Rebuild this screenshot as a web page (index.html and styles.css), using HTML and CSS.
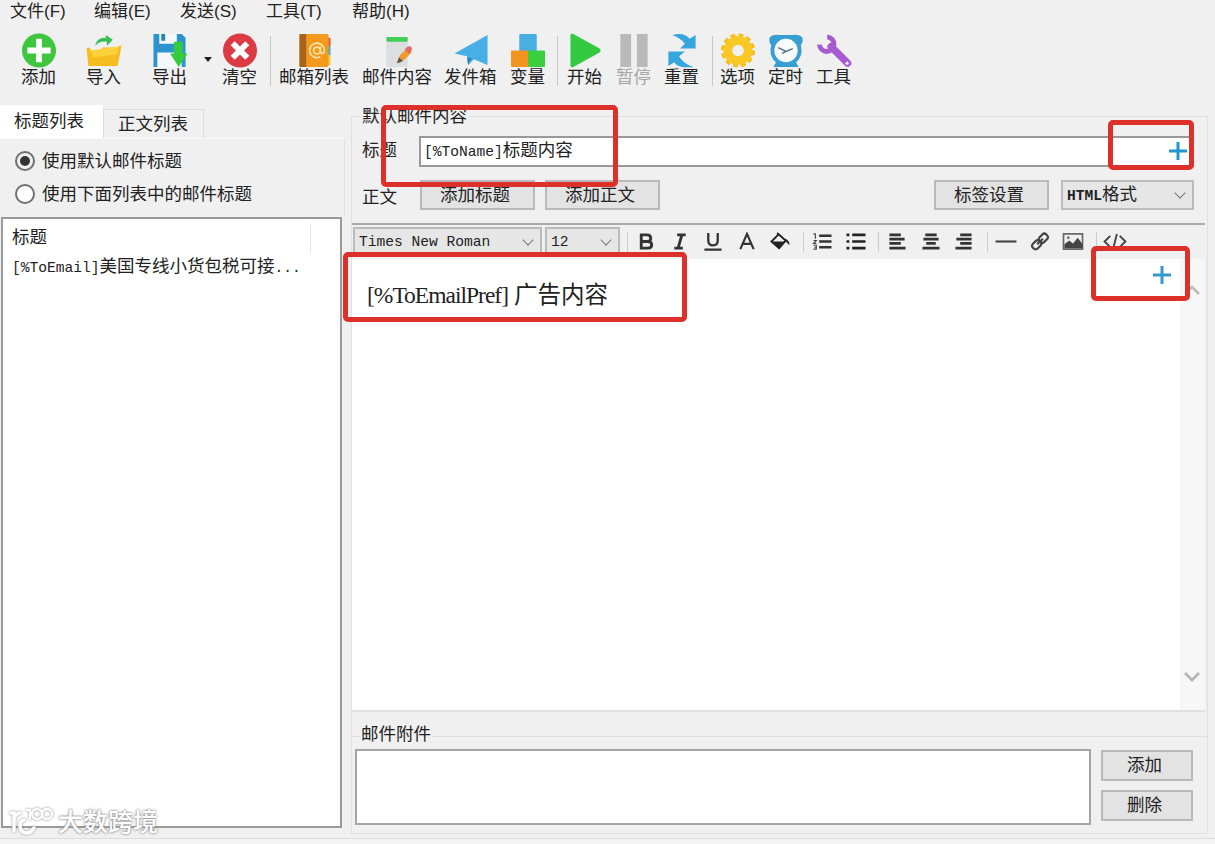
FILE: index.html
```html
<!DOCTYPE html>
<html lang="zh-CN">
<head>
    <meta charset="UTF-8">
    <meta name="viewport" content="width=device-width, initial-scale=1.0">
    <title>邮件内容</title>
    <link rel="stylesheet" href="styles.css">
</head>
<body>
<div class="window">

    <!-- Menu -->
    <div class="menu">
        <span>文件(F)</span>
        <span>编辑(E)</span>
        <span>发送(S)</span>
        <span>工具(T)</span>
        <span>帮助(H)</span>
    </div>

    <!-- Toolbar -->
    <div class="toolbar">
        <div class="tool">
            <svg width="36" height="36" viewBox="0 0 36 36"><circle cx="18" cy="18" r="17.500" fill="#3ec63e"/><path d="M18 6v24M6 18h24" stroke="#fff" stroke-width="6"/></svg>
            <span>添加</span>
        </div>
        <div class="tool">
            <svg width="36" height="36" viewBox="0 0 36 36"><path d="M0 16l3-1 2 3 8 0 4-3h16v-2h3l-4 21H2z" fill="#f7bd1e"/><path d="M4 18l29-4-2 8-24 3z" fill="#fcd23c"/><path d="M9 13c1-6 6-9 11-8V2l7 5-6 6v-4c-5-1-8 0-12 4z" fill="#35bf55"/></svg>
            <span>导入</span>
        </div>
        <div class="tool">
            <svg width="36" height="36" viewBox="0 0 36 36"><path d="M1 1h29l4 4v30H1z" fill="#2c93cf"/><path d="M7 1h18v10H7zM5 20h25v15H5z" fill="#f5f8fa"/><path d="M9 1h4v7H9z" fill="#2b80b5"/><path d="M22 9h9v12h5l-9 14-9-14h4z" fill="#35cb40"/></svg>
            <span>导出</span>
        </div>
        <div class="drop"></div>
        <div class="tool">
            <svg width="36" height="36" viewBox="0 0 36 36"><circle cx="18" cy="18" r="17.500" fill="#dc3b43"/><path d="M10.500 10.500l15 15M25.500 10.500l-15 15" stroke="#fff" stroke-width="6"/></svg>
            <span>清空</span>
        </div>
        <div class="sep"></div>
        <div class="tool">
            <svg width="34" height="36" viewBox="0 0 34 36"><path d="M30 5h3v9h-3z" fill="#e25b3b"/><path d="M30 14h3v9h-3z" fill="#3aaee0"/><path d="M30 23h3v10h-3z" fill="#f3d32c"/><rect x="1" y="1" width="30" height="34" rx="2" fill="#f39a1d"/><path d="M1 1h7v34H1z" fill="#a8641c"/><circle cx="19" cy="18" r="3.500" fill="none" stroke="#ffe2a6" stroke-width="1.700"/><path d="M22.500 14v5c0 3 4 3 4-1a7.500 7.500 0 1 0-4 6.500" fill="none" stroke="#ffe2a6" stroke-width="1.700"/></svg>
            <span>邮箱列表</span>
        </div>
        <div class="tool">
            <svg width="30" height="36" viewBox="0 0 30 36"><path d="M3 8h22v27H3z" fill="#dcdedf"/><rect x="3" y="4" width="22" height="5" rx="1" fill="#43cd55"/><path d="M14 31l3-8 8-8 4 5-8 8z" fill="#f19a2c"/><path d="M22 17l3-3q2-1 4 1 1 2-.500 4l-2 2z" fill="#e36868"/><path d="M14 31l2-6 4 4z" fill="#555"/></svg>
            <span>邮件内容</span>
        </div>
        <div class="tool">
            <svg width="36" height="36" viewBox="0 0 36 36"><path d="M35 2v31L21 27l-6 6-1-9L1 21z" fill="#47afe5"/><path d="M14 25l5 1-4 7z" fill="#2b86bd"/></svg>
            <span>发件箱</span>
        </div>
        <div class="tool">
            <svg width="36" height="36" viewBox="0 0 36 36"><rect x="9" y="1" width="18" height="18" rx="1" fill="#49afe3"/><rect x="0.500" y="18" width="18" height="17" rx="1" fill="#f4941f"/><rect x="18" y="18" width="17.500" height="17" rx="1" fill="#3bce3f"/></svg>
            <span>变量</span>
        </div>
        <div class="sep"></div>
        <div class="tool">
            <svg width="36" height="36" viewBox="0 0 36 36"><path d="M3 2q0-2 3-1l27 15q2 2 0 4L6 35q-3 1-3-2z" fill="#35c93f"/></svg>
            <span>开始</span>
        </div>
        <div class="tool disabled">
            <svg width="36" height="36" viewBox="0 0 36 36"><path d="M4 1h11v34H4zM21 1h11v34H21z" fill="#b9b9b9"/></svg>
            <span>暂停</span>
        </div>
        <div class="tool">
            <svg width="36" height="36" viewBox="0 0 36 36"><path d="M8 2c8-2 14-1 18 4l6-4v14H16l5-5c-3-4-7-7-13-9z" fill="#36a6de"/><path d="M30 35c-9 1-17 0-20-5l-6 4V19h17l-6 5c3 5 8 9 15 11z" fill="#36a6de"/></svg>
            <span>重置</span>
        </div>
        <div class="sep"></div>
        <div class="tool">
            <svg width="36" height="36" viewBox="0 0 36 36"><circle cx="18" cy="18" r="15.500" fill="none" stroke="#f5bd20" stroke-width="4" stroke-dasharray="4.870 3.250"/><circle cx="18" cy="18" r="10.500" fill="none" stroke="#f9c825" stroke-width="9"/></svg>
            <span>选项</span>
        </div>
        <div class="tool">
            <svg width="36" height="36" viewBox="0 0 36 36"><path d="M1 5q3-4 10-3h14q7-1 10 3 1 6-4 10L5 15Q0 11 1 5zM9 28l-4 7h26l-4-7z" fill="#359fd1"/><circle cx="18" cy="18" r="14" fill="#f7fbfe" stroke="#369fd3" stroke-width="4"/><path d="M10 15l8 4 7-3M18 19l-4 2" fill="none" stroke="#597384" stroke-width="1.500"/></svg>
            <span>定时</span>
        </div>
        <div class="tool">
            <svg width="36" height="36" viewBox="0 0 36 36"><path d="M15 14l17 17" stroke="#a75bd0" stroke-width="7.500" stroke-linecap="round"/><path d="M11 4a7.500 7.500 0 1 1-8 8" fill="none" stroke="#a75bd0" stroke-width="5"/><circle cx="31.500" cy="31" r="1.600" fill="#eee"/></svg>
            <span>工具</span>
        </div>
    </div>

    <div class="main">
        <!-- Left side: title list -->
        <div class="side">
            <div class="tabs">
                <div class="tab active">标题列表</div>
                <div class="tab">正文列表</div>
            </div>
            <div class="choices">
                <label><i class="radio checked"></i>使用默认邮件标题</label>
                <label><i class="radio"></i>使用下面列表中的邮件标题</label>
            </div>
            <div class="list">
                <div class="list-head">标题</div>
                <div class="list-row"><span class="mono">[%ToEmail]</span>美国专线小货包税可接<span class="mono">...</span></div>
            </div>
        </div>

        <!-- Right side: mail content -->
        <div class="content">
            <div class="group">
                <div class="legend">默认邮件内容</div>
                <div class="title-row">
                    <span class="label">标题</span>
                    <div class="input">
                        <span><span class="mono">[%ToName]</span>标题内容</span>
                        <svg width="18" height="18" viewBox="0 0 18 18"><path d="M9 0v18M0 9h18" stroke="#2095cf" stroke-width="3"/></svg>
                    </div>
                </div>
                <div class="body-row">
                    <span class="label">正文</span>
                    <div class="btn">添加标题</div>
                    <div class="btn">添加正文</div>
                    <div class="btn tag-btn">标签设置</div>
                    <div class="select format"><span><span class="mono html">HTML</span>格式</span><i class="chevron"></i></div>
                </div>

                <div class="editor">
                    <div class="editor-bar">
                        <div class="select font"><span class="mono">Times New Roman</span><i class="chevron"></i></div>
                        <div class="select size"><span class="mono">12</span><i class="chevron"></i></div>
                        <div class="format-icons">
                            <i class="line"></i>
                            <svg viewBox="0 0 20 20"><path d="M5 3h6q4 0 4 3.500T11 10H5zM5 10h7q4 0 4 3.500T12 17H5z" fill="none" stroke="#333" stroke-width="3"/></svg>
                            <svg viewBox="0 0 20 20"><path d="M7 3h9M4 17h9M12 3L8 17" fill="none" stroke="#333" stroke-width="3"/></svg>
                            <svg viewBox="0 0 20 20"><path d="M5 1v8q0 5 5 5t5-5V1M1 18.500h18" fill="none" stroke="#333" stroke-width="2.400"/></svg>
                            <svg viewBox="0 0 20 20"><path d="M3 18L10 2l7 16M5.500 12.500h9" fill="none" stroke="#333" stroke-width="2.300"/></svg>
                            <svg viewBox="0 0 20 20"><path d="M7 1l9 8-7 8-8-7 7-7" fill="none" stroke="#222" stroke-width="2"/><path d="M1 10h15l-7 8z" fill="#222"/><path d="M15 7q5 1 5 7l-3-3z" fill="#222"/></svg>
                            <i class="line"></i>
                            <svg viewBox="0 0 20 20"><path d="M7 4h13M7 10h13M7 16h13" stroke="#333" stroke-width="2.500"/><path d="M1 2h2v5M1 9h3l-3 3h3M1 14h3v4H1M2 16h2" fill="none" stroke="#444" stroke-width="1.200"/></svg>
                            <svg viewBox="0 0 20 20"><path d="M6 3h14M6 10h14M6 17h14M0 3h3M0 10h3M0 17h3" stroke="#222" stroke-width="2.700"/></svg>
                            <i class="line"></i>
                            <svg viewBox="0 0 20 20"><path d="M2 3h12M2 7.500h16M2 12h12M2 17h17" stroke="#333" stroke-width="2.800"/></svg>
                            <svg viewBox="0 0 20 20"><path d="M4 3h12M2 7.500h16M5 12h10M1 17h18" stroke="#333" stroke-width="2.800"/></svg>
                            <svg viewBox="0 0 20 20"><path d="M6 3h12M2 7.500h16M6 12h12M1 17h17" stroke="#333" stroke-width="2.800"/></svg>
                            <i class="line"></i>
                            <svg class="wide" viewBox="0 0 24 20"><path d="M1 10h22" stroke="#444" stroke-width="2.200"/></svg>
                            <svg viewBox="0 0 20 20"><g fill="none" stroke="#444" stroke-width="2.300"><rect x="8.500" y="3" width="10" height="7" rx="3" transform="rotate(-45 13.500 6.500)"/><rect x="1.500" y="10" width="10" height="7" rx="3" transform="rotate(-45 6.500 13.500)"/><path d="M7 13l6-6"/></g></svg>
                            <svg class="wide" viewBox="0 0 24 20"><rect x="2" y="2" width="20" height="16" fill="none" stroke="#666" stroke-width="1.800"/><path d="M3 17v-4l5-4 4 3 5-6 5 7v4z" fill="#444"/><circle cx="7" cy="6" r="1.500" fill="#777"/></svg>
                            <i class="line"></i>
                            <svg class="wide" viewBox="0 0 24 20"><path d="M7 4L1 10l6 6M17 4l6 6-6 6M14 2l-4 16" fill="none" stroke="#444" stroke-width="2"/></svg>
                        </div>
                    </div>
                    <div class="editor-body">
                        <div class="page">
                            <p><span class="serif">[%ToEmailPref]</span>广告内容</p>
                            <svg width="18" height="18" viewBox="0 0 18 18"><path d="M9 0v18M0 9h18" stroke="#3399cf" stroke-width="3"/></svg>
                        </div>
                        <div class="scroll">
                            <svg width="18" height="12" viewBox="0 0 18 12"><path d="M2 10l7-7 7 7" fill="none" stroke="#bbb" stroke-width="2.500"/></svg>
                            <svg width="18" height="12" viewBox="0 0 18 12"><path d="M2 2l7 7 7-7" fill="none" stroke="#b5b5b5" stroke-width="2.800"/></svg>
                        </div>
                    </div>
                </div>
            </div>

            <div class="group attach">
                <div class="legend">邮件附件</div>
                <div class="attach-row">
                    <div class="attach-list"></div>
                    <div class="attach-btns">
                        <div class="btn">添加</div>
                        <div class="btn">删除</div>
                    </div>
                </div>
            </div>
        </div>
    </div>
    <div class="status"></div>

    <!-- Highlight frames -->
    <div class="mark mark-title"></div>
    <div class="mark mark-title-add"></div>
    <div class="mark mark-body"></div>
    <div class="mark mark-body-add"></div>

    <!-- Watermark -->
    <div class="watermark">
        <svg width="46" height="32" viewBox="0 0 46 32"><g fill="none" stroke="#fff" stroke-linecap="round"><path d="M2 7h3v18M5 13q1-5 6-6M25 22q-3 5-8 5-6-1-6-7 0-5 4-6" stroke-width="3.500"/><path d="M18 4h3v9" stroke-width="2.500"/><circle cx="28" cy="8" r="5" stroke-width="2.500"/><circle cx="38" cy="8" r="5" stroke-width="2.500"/></g></svg>
        <span>大数跨境</span>
    </div>
</div>
</body>
</html>
```
FILE: styles.css
```css
* {
    box-sizing: border-box;
}

body {
    margin: 0;
    background-color: #f0f0f0;
    color: #222;
    font-family: "Liberation Sans", "Noto Sans CJK SC", sans-serif;
    font-size: 17.500px;
    line-height: 24px;
}

svg {
    display: block;
}

.window {
    position: relative;
    display: flex;
    flex-direction: column;
    width: 1215px;
    height: 844px;
    overflow: hidden;
    white-space: nowrap;
}

/* SimSun-like latin text */
.mono {
    font-family: "Liberation Mono", monospace;
    font-size: 14.600px;
}

/* Menu */
.menu {
    display: flex;
    height: 24px;
    padding-left: 10px;
    font-size: 17px;
    line-height: 23px;
}

.menu span {
    width: 86px;
}

.menu span:first-child {
    width: 84px;
}

/* Toolbar */
.toolbar {
    display: grid;
    grid-template-columns: 65px 66px 52px 18px 48px 9px 83px 82px 66px 47px 10px 49px 48px 48px 8px 48px 48px 35px;
    justify-items: start;
    height: 81px;
    padding: 9px 0 0 21px;
}

.tool {
    display: flex;
    flex-direction: column;
    align-items: center;
    min-width: 35px;
}

.tool svg {
    height: 35px;
}

.tool span {
    margin: -3px 1px 0 0;
}

.disabled {
    color: #a5a5a5;
}

.drop {
    margin-top: 24px;
    border: 4px solid transparent;
    border-top: 5px solid #222;
    border-bottom: none;
    height: 0;
}

.sep {
    width: 1px;
    height: 50px;
    margin-top: 3px;
    background-color: #c8c8c8;
}

.main {
    display: flex;
    height: 733px;
}

/* Left side */
.side {
    display: flex;
    flex-direction: column;
    width: 348px;
    padding-right: 3px;
}

.tabs {
    display: flex;
    align-items: flex-end;
    height: 33px;
}

.tab {
    width: 101px;
    height: 29px;
    padding: 2px 0 0 14px;
    border: 1px solid #dcdcdc;
    border-bottom: none;
}

.tab.active {
    width: 103px;
    height: 33px;
    padding: 4px 0 0 14px;
    border: none;
    background-color: #fff;
}

.choices {
    height: 79px;
    padding: 10px 0 0 15px;
    border: 1px solid #e3e3e3;
    border-top-color: #fafafa;
    border-left: none;
    border-bottom: none;
}

.choices label {
    display: flex;
    align-items: center;
    height: 24px;
    margin-bottom: 9px;
}

.radio {
    width: 20px;
    height: 20px;
    margin-right: 7px;
    padding: 3px;
    border: 2px solid #707070;
    border-radius: 50%;
    background-color: #fff;
}

.radio.checked {
    background: #333 content-box;
}

.list {
    width: 341px;
    height: 611px;
    margin-left: 1px;
    padding: 4px 0 0 9px;
    border: 2px solid #9a9a9a;
    background-color: #fff;
}

.list-head {
    width: 299px;
    height: 30px;
    border-right: 1px solid #e5e5e5;
    line-height: 28px;
}

.list-row {
    line-height: 26px;
}

/* Right side */
.content {
    width: 862px;
    padding: 11px 0 0 3px;
}

.group {
    height: 620px;
    width: 857px;
    border: 1px solid #e0e0e0;
    border-bottom: none;
}

.legend {
    width: max-content;
    height: 24px;
    margin: -13px 0 0 9px;
    padding: 0 1px;
    background-color: #f0f0f0;
}

.title-row {
    display: flex;
    height: 31px;
    margin-top: 8px;
    padding-left: 10px;
}

.label {
    width: 57px;
    line-height: 29px;
}

.input {
    display: flex;
    align-items: center;
    justify-content: space-between;
    width: 775px;
    padding: 0 5px 2px 3px;
    border: 2px solid #999;
    background-color: #fff;
}

.body-row {
    display: flex;
    height: 30px;
    margin-top: 13px;
    padding-left: 10px;
}

.body-row .label {
    width: 58px;
    line-height: 34px;
}

.btn {
    width: 115px;
    height: 31px;
    margin-right: 10px;
    padding-right: 5px;
    border: 2px solid #b9b9b9;
    background-color: #e3e3e3;
    line-height: 27px;
    text-align: center;
}

.body-row .btn {
    height: 30px;
}

.tag-btn {
    margin-left: 264px;
    margin-right: 12px;
}

.select {
    display: flex;
    align-items: center;
    justify-content: space-between;
    padding: 0 6px 0 4px;
    border: 2px solid #bbb;
    background-color: #e6e6e6;
}

.format {
    width: 133px;
    height: 30px;
}

.html {
    font-weight: bold;
}

.chevron {
    width: 8px;
    height: 8px;
    margin: -4px 2px 0 0;
    border: solid #777;
    border-width: 0 1.500px 1.500px 0;
    transform: rotate(45deg);
}

/* Editor */
.editor {
    width: 853px;
    height: 489px;
    margin-top: 13px;
    border-top: 2px solid #aaa;
    border-bottom: 2px solid #e0e0e0;
}

.editor-bar {
    display: flex;
    height: 34px;
    padding: 2px 0 3px 1px;
}

.font {
    width: 189px;
    margin-right: 3px;
}

.size {
    width: 75px;
}

.format-icons {
    display: flex;
    align-items: center;
    padding-left: 8px;
}

.format-icons svg {
    width: 20px;
    height: 19px;
    margin-right: 13.600px;
}

.format-icons .wide {
    width: 24px;
    margin: 0 11.600px 0 -2px;
}

.format-icons .line {
    width: 1px;
    height: 20px;
    margin: 0 8px 0 -1px;
    background-color: #ccc;
}

.editor-body {
    display: flex;
    height: 451px;
}

.page {
    display: flex;
    justify-content: space-between;
    width: 828px;
    padding: 7px 9px 0 15px;
    background-color: #fff;
}

.page p {
    margin: 14px 0 0;
    font-size: 23.500px;
    line-height: 30px;
}

.serif {
    margin-right: 6px;
    font-family: "Liberation Serif", serif;
    letter-spacing: -1px;
}

.scroll {
    display: flex;
    flex-direction: column;
    justify-content: space-between;
    width: 25px;
    padding: 25px 0 27px 3px;
    background-color: #f7f7f7;
}

/* Attachments */
.attach {
    height: 98px;
    border-bottom: 1px solid #e0e0e0;
}

.attach .legend {
    height: 26px;
    margin: -15px 0 0 8px;
}

.attach-row {
    display: flex;
    padding: 1px 0 0 3px;
}

.attach-list {
    width: 736px;
    height: 76px;
    border: 2px solid #a5a5a5;
    background-color: #fff;
}

.attach-btns {
    padding: 1px 0 0 10px;
}

.attach-btns .btn {
    width: 92px;
    margin: 0 0 9px;
}

.status {
    height: 6px;
    border-top: 1px solid #ddd;
    background-color: #f3f3f3;
}

/* Highlight frames */
.mark {
    position: absolute;
    border: 5px solid #dd302b;
    border-radius: 5px;
}

.mark-title {
    left: 381px;
    top: 105px;
    width: 237px;
    height: 82px;
}

.mark-title-add {
    left: 1108px;
    top: 120px;
    width: 86px;
    height: 50px;
}

.mark-body {
    left: 343px;
    top: 252px;
    width: 344px;
    height: 70px;
}

.mark-body-add {
    left: 1091px;
    top: 246px;
    width: 99px;
    height: 55px;
}

.watermark {
    position: absolute;
    left: 9px;
    top: 806px;
    display: flex;
    color: #fff;
    font-size: 25px;
    font-weight: 500;
    line-height: 32px;
    text-shadow: 0 0 2px #888, 0 0 3px #999;
}

.watermark svg {
    margin-right: 3px;
    filter: drop-shadow(0 0 1px #888);
}
```
